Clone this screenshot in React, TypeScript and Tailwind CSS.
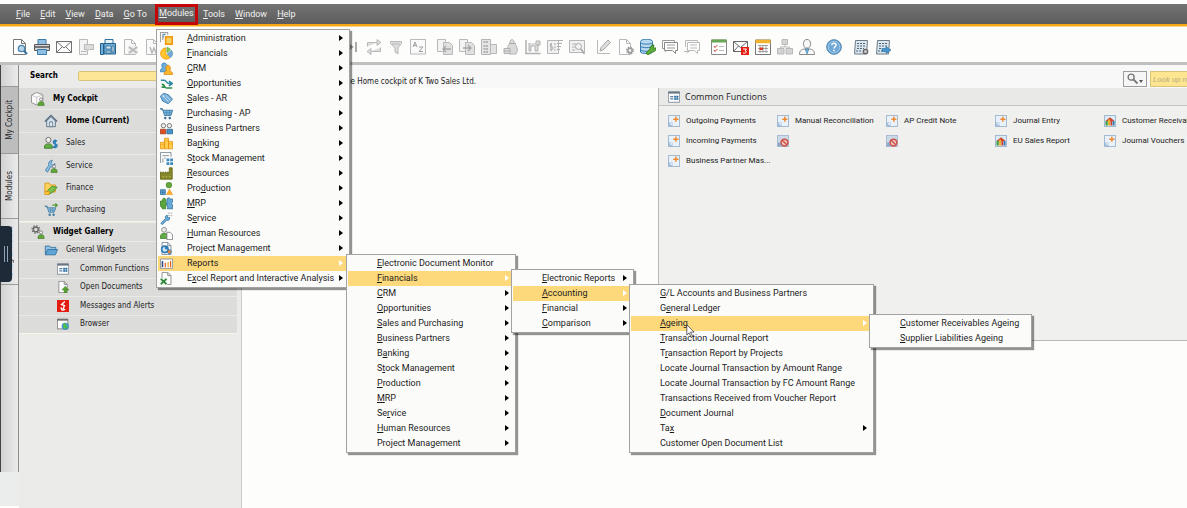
import React from 'react';
import { clsx } from 'clsx';

type MenuEntry = {
  label: string;
  key?: number;
  icon?: React.ReactNode;
  arrow?: boolean;
  active?: boolean;
  sub?: React.ReactNode;
};

function Svg({ children, className = 'size-4' }: { children: React.ReactNode; className?: string }) {
  return (
    <svg viewBox="0 0 16 16" className={clsx('shrink-0', className)} fill="none" aria-hidden="true">
      {children}
    </svg>
  );
}

const sheet = (stroke: string, fill = '#fff') => (
  <path d="M2.5.5h7l4 4v11h-11zM9.5.5v4h4" fill={fill} stroke={stroke} />
);

/* ---------- module menu icons ---------- */

const moduleIcons = {
  admin: (
    <Svg>
      <path d="M.5 12.5V.5h9v3M3.500 10V3.500H6" stroke="#7d7d7d" />
      <path d="M3 3h4M3 6h2" stroke="#5d94bb" strokeWidth="1.5" />
      <rect x="7" y="6" width="8" height="9" fill="#fbd466" stroke="#f0960f" strokeWidth="2" />
    </Svg>
  ),
  financials: (
    <Svg>
      <path d="M7 8V1a7 7 0 1 0 5 12.500z" fill="#ffc62c" stroke="#ee9a12" />
      <path d="M8.5 7V.5a7 7 0 0 1 4.500 2.500z" fill="#8ccf4a" stroke="#4c9434" strokeWidth=".7" />
      <path d="M9 8.5 14 4a7 7 0 0 1-1 9z" fill="#73abd3" stroke="#3b79a8" strokeWidth=".7" />
    </Svg>
  ),
  crm: (
    <Svg>
      <path d="M.5 12c0-3 1-4 2.500-5C1 3 3 .5 6 1.500s3 2 1 5.500l2 5z" fill="#6baedb" stroke="#3b7fb2" />
      <path d="M5 15.500c0-3 1-4 3-5C6 6 8 4 10 4s4 3 2 7c2 1 3.500 1 3.500 4.500z" fill="#fcb62a" stroke="#e28a12" />
    </Svg>
  ),
  opportunities: (
    <Svg>
      <path d="M1 4h4c3 0 3 4 6 4h4M11 5l4 3-4 3" stroke="#2a8aa0" strokeWidth="2" />
      <path d="M15 13.500H8c-5 0 0-4.500-6-4.500M2 12.500h5" stroke="#2c8c4c" strokeWidth="2" />
    </Svg>
  ),
  sales: (
    <Svg>
      <path d="m.5 5 4-3.500 6 2L15.500 9 10 14.500 3 11z" fill="#74aed8" stroke="#3a7aab" />
      <path d="m4 5 6.500 7M7 4l6 6.500" stroke="#d6eaf6" />
      <circle cx="4" cy="5" r="1" fill="#fff" />
    </Svg>
  ),
  purchasing: (
    <Svg>
      <path d="M0 2h3l2.500 8.500h8l2-6.500H4z" fill="#74b4dd" stroke="#346d98" />
      <path d="M5 7h9.500M8 4v6.500M11.500 4v6.500" stroke="#3f80ae" strokeWidth=".7" />
      <circle cx="6.5" cy="13.5" r="1.5" fill="#346d98" />
      <circle cx="12" cy="13.5" r="1.5" fill="#346d98" />
    </Svg>
  ),
  partners: (
    <Svg>
      <circle cx="4.2" cy="4.5" r="2.7" fill="#eee" stroke="#666" />
      <circle cx="11.6" cy="4.5" r="2.700" fill="#eee" stroke="#666" />
      <path d="M.5 14.500V9h6.500v5.500z" fill="#dd5225" stroke="#a83a18" />
      <path d="M8.500 14.500V9h7v5.500z" fill="#4a92c6" stroke="#276997" />
    </Svg>
  ),
  banking: (
    <Svg>
      <path d="M.5 6.500h5v8h-5zM5.500 1.500h5v13h-5zM10.500 5.500h5v9h-5z" fill="#ffcf4b" stroke="#e99416" />
      <path d="M.5 9.500h5M5.500 4.500h5M10.500 8.500h5" stroke="#e99416" strokeWidth=".7" />
    </Svg>
  ),
  stock: (
    <Svg>
      <path d="M.5 13.500V.5h13V6M3 4.500h8M3.500 8v5M5 7.500h2" stroke="#6f7c86" />
      <path d="M8 8h3.500v3.500H8zM12.500 8H16v3.500h-3.500zM8 12.500h3.500V16H8zM12.500 12.500H16V16h-3.500z" fill="#3f8cc0" />
    </Svg>
  ),
  resources: (
    <Svg>
      <path d="M.5 15V6l3 2V6l3 2V6l3 2V6l2 1V1h3.500v14z" fill="#86882a" stroke="#616413" />
      <path d="M3 12h2M7 12h2M11 12h2" stroke="#c8c862" />
    </Svg>
  ),
  production: (
    <Svg>
      <circle cx="11" cy="3.800" r="3.500" fill="#64a73a" stroke="#3f7e20" strokeWidth=".7" />
      <path d="M.5 9.500h6v6h-6z" fill="#74b4dd" stroke="#286a9a" />
      <path d="M3.500 9.500v6M.5 12.500h6" stroke="#286a9a" />
      <path d="m8 15.500 3.700-6.500 3.800 6.500z" fill="#fbb22a" stroke="#e68c10" strokeWidth=".7" />
    </Svg>
  ),
  mrp: (
    <Svg>
      <path d="M.5 5H3c0-5 4-5 4 0v2c2 0 2 3 0 3v4.500H3c0-2-2.500-2-2.500-4.500z" fill="#5aa53c" stroke="#377f20" />
      <path d="M8.500 2.500c1-2 3-2 4 0h3v4c-2 0-2 3 0 3v5H9c2-3-2-4-.5-6z" fill="#66a9d6" stroke="#33719f" />
    </Svg>
  ),
  service: (
    <Svg>
      <path d="m1 14 6-6c-1-2 0-4 2-4v3h3c0 3-2 4-4 3l-5 5.500z" fill="#6fb0dc" stroke="#31719f" />
      <path d="M10 1.500h6M10 4.500h6" stroke="#999" strokeDasharray="2 1" />
    </Svg>
  ),
  hr: (
    <Svg>
      <circle cx="5" cy="3.500" r="3" fill="#eee" stroke="#777" />
      <path d="M.5 14c0-5 1-6 4.500-6s4.500 1 4.500 6z" fill="#63ad45" stroke="#3f7e2c" />
      <path d="M8.500 6.500h4l3 3v6h-7z" fill="#fff" stroke="#777" />
    </Svg>
  ),
  project: (
    <Svg>
      {sheet('#6d7c88')}
      <circle cx="6" cy="9" r="4" fill="#cfe7f5" stroke="#2e7db4" strokeWidth="2" />
      <path d="M6 9V5a4 4 0 0 1 4 4z" fill="#2e7db4" />
      <circle cx="11.500" cy="12" r="2.500" fill="#e98240" stroke="#2e7db4" />
    </Svg>
  ),
  reports: (
    <Svg>
      <path d="M.5 2.500h15v11.500H.5z" fill="#fff" stroke="#7e8790" />
      <path d="M3 5v7.500" stroke="#2d4e82" strokeWidth="2" />
      <path d="M6.500 7v5.500M13 5v7.500" stroke="#e35b1d" strokeWidth="1.500" />
      <path d="M10 6v6.500" stroke="#f2a01c" strokeWidth="1.500" />
    </Svg>
  ),
  excel: (
    <Svg>
      {sheet('#7b7b7b')}
      <path d="M0 7h9v9H0z" fill="#e4f2e4" />
      <path d="m1 8.500 7 6.500M8 8.500 1 15" stroke="#2b8038" strokeWidth="2" />
    </Svg>
  ),
};

/* ---------- sidebar icons ---------- */

const person = (
  <>
    <circle cx="11.5" cy="8.5" r="1.8" fill="#f2f2f2" stroke="#666" strokeWidth=".8" />
    <path d="M8 15.500c0-3.500 1-4.500 3.500-4.500s3.500 1 3.500 4.500z" fill="#5fa53a" stroke="#447f26" strokeWidth=".8" />
  </>
);

const sideIcons = {
  cockpit: (
    <Svg>
      <path d="m.5 3.500 6-3 7 2.500v8l-7 4-6-3z" fill="#fafafa" stroke="#888" />
      <path d="m.5 3.500 6 2.500 7-3M6.500 6v9" stroke="#aaa" strokeWidth=".7" />
      {person}
    </Svg>
  ),
  home: (
    <Svg>
      <path d="M3 8v6.500h10V8L8 3z" fill="#cfe0ef" stroke="#5b6f80" />
      <path d="m1 8.500 7-7 7 7" stroke="#55697a" strokeWidth="1.500" />
      <path d="M6.500 14.500V9h3v5.500z" fill="#fff" stroke="#5b6f80" />
    </Svg>
  ),
  sales: (
    <Svg>
      <circle cx="5" cy="4.500" r="3" fill="#eee" stroke="#666" />
      <path d="M.5 14c0-4 1-5 4.500-5s4.500 1 4.500 5z" fill="#63ad45" stroke="#3f7e2c" />
      <path d="M15 6c-3-2-5 0-4 2s4 1 4 3-3 3-5 1M12.700 4v10" stroke="#2579b6" strokeWidth="1.600" />
    </Svg>
  ),
  service: (
    <Svg>
      <path d="m1.500 13 4-6c-1-3 1-5.500 4-5.500L8 5l2 2 2.500-2c0 3-2 4.500-5 4L4 15z" fill="#8cbfe0" stroke="#4580aa" />
      {person}
    </Svg>
  ),
  finance: (
    <Svg>
      <path d="M1 2.500h5l1 2h6v8H1z" fill="#fcd25a" stroke="#dd9718" />
      <path d="m4 11 5-5 6 1-4 5-5 3z" fill="#7cc04a" stroke="#448a28" />
      <path d="M1 12h5v3.500H1z" fill="#ffc438" stroke="#dd9718" />
    </Svg>
  ),
  purchasing: (
    <Svg>
      <path d="M1 3.500h2.500l2 7h6l2-5H4.500z" fill="#9ccbe8" stroke="#427aa2" />
      <path d="M5.500 8h7M7.500 5.500v5M10 5.500v5" stroke="#427aa2" strokeWidth=".7" />
      <circle cx="6.500" cy="13.500" r="1.400" fill="#427aa2" />
      <circle cx="11" cy="13.500" r="1.400" fill="#427aa2" />
      <path d="M9.500 2.500H15M13 .5l2 2-2 2" stroke="#4f9a35" strokeWidth="1.500" />
    </Svg>
  ),
  gallery: (
    <Svg>
      <circle cx="5.500" cy="5" r="2.800" stroke="#666" strokeWidth="1.600" />
      <circle cx="5.500" cy="5" r="4.300" stroke="#666" strokeWidth="1.400" strokeDasharray="1.500 1.880" />
      {person}
    </Svg>
  ),
  folder: (
    <Svg>
      <path d="M1.500 13V3.500h5l1 1.500h6v3" fill="#8fc3e6" stroke="#35709c" />
      <path d="M4 7.500h11.500L13 13.500H1.500z" fill="#5ea6d8" stroke="#35709c" />
    </Svg>
  ),
  functions: (
    <Svg>
      <path d="M.5 1h15v14H.5z" fill="#fff" stroke="#697782" />
      <path d="M.5 1h15v2.500H.5z" fill="#697782" />
      <path d="M3 7.500h4M3 10.500h4" stroke="#5b7f9f" strokeWidth="1.500" />
      <path d="M8.500 6.500h2v2h-2zM11.500 6.500h2v2h-2zM8.500 9.500h2v2h-2zM11.500 9.500h2v2h-2z" fill="#246ca2" stroke="#246ca2" strokeWidth=".5" />
    </Svg>
  ),
  open: (
    <Svg>
      {sheet('#777')}
      <path d="m11 7 5 5h-3v4H9.500v-4H6.500z" fill="#55a130" stroke="#38781c" strokeWidth=".6" />
    </Svg>
  ),
  alert: (
    <Svg>
      <path d="M0 0h16v16H0z" fill="#e51c10" />
      <path d="M10.500 2 6 6l4 1.500L8 12M5 10l2 3.500 4-1" stroke="#fff" strokeWidth="1.800" />
    </Svg>
  ),
  browser: (
    <Svg>
      <path d="M.5 1.500h14v13H.5z" fill="#fff" stroke="#666" />
      <path d="M.5 2.500h14" stroke="#666" strokeWidth="2" />
      <circle cx="11" cy="11" r="4.500" fill="#3d9fd6" stroke="#2c7ca9" strokeWidth=".6" />
      <path d="M8 9c2-3 4-2 4 0s3 1 2 3-3 3-4 2-2-2-2-5" fill="#50bd4d" />
    </Svg>
  ),
};

/* ---------- toolbar icons ---------- */

const G = '#b9b9b9';

const copySheets = (
  <>
    <path d="M.5.5h8v12h-8z" fill="#f3f3f3" stroke={G} />
    <path d="M6.500 3.500h6l3 3v9h-9z" fill="#e0e0e0" stroke={G} />
  </>
);

const tools = {
  preview: (
    <Svg>
      <path d="M1.500.5h8l4 4v11h-12zM9.500.5v4h4" fill="#fff" stroke="#777" />
      <circle cx="9.500" cy="9.500" r="3.200" fill="#b5d5eb" stroke="#4d87b0" strokeWidth="1.300" />
      <path d="m12 12 3 3" stroke="#33719f" strokeWidth="2" />
    </Svg>
  ),
  print: (
    <Svg>
      <path d="M4 .5h8v6H4z" fill="#8dc0e2" stroke="#3c7ba8" />
      <path d="M.5 5.500h15v6H.5z" fill="#d5d5d5" stroke="#595959" />
      <path d="M1 8h14" stroke="#555" strokeWidth="1.500" />
      <path d="M3.500 10.500h9v5h-9z" fill="#8dc0e2" stroke="#3c7ba8" />
    </Svg>
  ),
  mail: (
    <Svg>
      <path d="M.5 2.500h15v11H.5zl7.500 6.500 7.500-6.500M.5 13.500 6 8M15.500 13.500 10 8" fill="#fdfdfd" stroke="#737373" />
    </Svg>
  ),
  sms: (
    <Svg>
      <path d="M1.500.5h8v15h-8z" fill="#f3f3f3" stroke={G} />
      <path d="M3 12.500h5" stroke={G} />
      <path d="M6.500 5.500h9v5H11l-2 2v-2H6.500z" fill="#dcdcdc" stroke={G} />
    </Svg>
  ),
  fax: (
    <Svg>
      <path d="M5 .5h8v6H5z" fill="#e5f2fa" stroke="#33719f" />
      <path d="M.5 4.500h3v11h-3zM4 4.500h11.500v10.500H4z" fill="#6fafd9" stroke="#275f8b" />
      <path d="M6 7h5v3H6zM12 7h2v6h-2zM6 12h5v2H6z" fill="#cfe7f5" stroke="#275f8b" strokeWidth=".7" />
    </Svg>
  ),
  excel: (
    <Svg>
      {sheet(G, '#fafafa')}
      <path d="M6 7h10v8H6z" fill="#eee" />
      <path d="m7 8 8 6M15 8l-8 6" stroke={G} strokeWidth="2" />
    </Svg>
  ),
  word: (
    <Svg>
      {sheet(G, '#fafafa')}
      <path d="m6 8 2 6 2-5 2 5 2-6" stroke={G} strokeWidth="1.500" />
    </Svg>
  ),
  last: (
    <Svg>
      <path d="m4 3.500 6 4.500-6 4.500z" fill="#aaa" />
      <path d="M12 3v10" stroke="#aaa" strokeWidth="2" />
    </Svg>
  ),
  refresh: (
    <Svg>
      <path d="M1.500 7.500v-4h10M11 .5v6l4-3zM14.500 8.500v4h-10M5 9.500v6l-4-3z" fill="#ddd" stroke={G} />
    </Svg>
  ),
  filter: (
    <Svg>
      <path d="M2.500 2.500h11v2L10 9v6l-3-2V9L2.500 4.500z" fill="#ddd" stroke={G} />
      <path d="M4 5h8" stroke={G} />
    </Svg>
  ),
  sort: (
    <Svg>
      <path d="M.5.5h15v14.500H.5z" fill="#fafafa" stroke={G} />
      <path d="m3 8 2-5 2 5M4 6.500h2M9 8h4l-4 4.500h4" stroke="#9f9f9f" />
    </Svg>
  ),
  base: (
    <Svg>
      {copySheets}
      <path d="M14 10H6M9 7l-3 3 3 3" stroke="#a5a5a5" strokeWidth="1.300" />
    </Svg>
  ),
  target: (
    <Svg>
      {copySheets}
      <path d="M4 9h8M9 6l3 3-3 3" stroke="#a5a5a5" strokeWidth="1.300" />
    </Svg>
  ),
  gross: (
    <Svg>
      <path d="M.5.5h9v15h-9z" fill="#e6e6e6" stroke="#b5b5b5" />
      <path d="M2.500 3h5M2.500 7h5M2.500 10h5M2.500 13h5" stroke="#a5a5a5" strokeWidth="1.500" strokeDasharray="2 .5" />
      <path d="M9.500 5.500h6v9h-6z" fill="#e2e2e2" stroke={G} />
    </Svg>
  ),
  payment: (
    <Svg>
      <path d="M7 4C6-.5 12-.5 11 4c4 4 4 8 2 11H6C4 11 4 7 7 4z" fill="#dadada" stroke="#b5b5b5" />
      <path d="M1 9.500h6v5H1z" fill="#ddd" stroke="#b0b0b0" />
      <path d="M6 4.500h7M1 12h6" stroke="#aaa" />
    </Svg>
  ),
  volume: (
    <Svg>
      <path d="M1 1v13.500h14.500" stroke="#b0b0b0" strokeWidth="1.500" />
      <path d="M4 4v8h2V7h4v5h3V4M11 2h4v4h-4z" fill="#ddd" stroke="#b0b0b0" />
    </Svg>
  ),
  journal: (
    <Svg>
      <path d="M.5 1.500h11v13H.5z" fill="#f1f1f1" stroke="#b5b5b5" />
      <path d="M10 1.500h6M10 4.500h5M10 7.500h4M10 10.500h3M7 5h2M7 8h2M7 11h2" stroke="#b0b0b0" />
      <path d="M5 5c-3 0-2 3 0 3s1 3-1 3M4 4v8" stroke="#a5a5a5" />
    </Svg>
  ),
  lookup: (
    <Svg>
      <path d="M.5 1.500h15v12H.5z" fill="#f1f1f1" stroke="#b5b5b5" />
      <path d="M3 5h4M3 8h3M3 11h3" stroke="#b0b0b0" />
      <circle cx="9.500" cy="7.500" r="3" fill="#f3f3f3" stroke="#a5a5a5" />
      <path d="m12 10 3.500 5" stroke="#a5a5a5" strokeWidth="1.500" />
    </Svg>
  ),
  layout: (
    <Svg>
      <path d="M1.500 1v13.500H14" stroke={G} />
      <path d="m4 12 1-3.500L12 1l2.500 2.500L7 11z" fill="#ddd" stroke="#a5a5a5" />
    </Svg>
  ),
  formSettings: (
    <Svg>
      <path d="M1.500.5h7l4 4v11h-11zM8.500.5v4h4" fill="#fff" stroke={G} />
      <circle cx="12" cy="11.500" r="2.200" fill="#eee" stroke="#999" strokeWidth="1.500" />
      <circle cx="12" cy="11.500" r="3.400" stroke="#999" strokeWidth="1.200" strokeDasharray="1.400 1.270" />
    </Svg>
  ),
  query: (
    <Svg>
      <path d="M.5 2.500c0-3 12-3 12 0v10.500c0 2-12 2-12 0z" fill="#b7d9f1" stroke="#347aad" />
      <path d="M.5 4c2 1.500 10 1.500 12 0M.5 7.500c2 1.500 10 1.500 12 0M.5 11c2 1.500 6 1.500 8 1" stroke="#347aad" />
      <path d="m6 14 4-4c0-2 1-4 4-4l-1 3h3c0 3-2 4-4 4l-4 3z" fill="#5fae3b" stroke="#39801f" />
    </Svg>
  ),
  chat: (
    <Svg>
      <path d="M.5 1.500h12v8h-6l-3 3v-3h-3z" fill="#fff" stroke="#999" />
      <path d="M2.500 3.500h13v8h-2v3l-3-3h-8z" fill="#fff" stroke="#888" />
      <path d="M5 6h8M5 9h8" stroke="#999" />
    </Svg>
  ),
  chatOff: (
    <Svg>
      <path d="M1.500 8V1.500h12v2" stroke={G} />
      <path d="M3.500 3.500h12v8h-2v3l-3-3h-7z" fill="#fff" stroke={G} />
      <path d="M6 6h7M6 9h7M0 12.500h5M3 10.500l2 2-2 2" stroke={G} />
    </Svg>
  ),
  checklist: (
    <Svg>
      <path d="M.5 1h15v14.500H.5z" fill="#fff" stroke="#888" />
      <path d="M.5 2h15" stroke="#6aa755" strokeWidth="3" />
      <path d="m3 7 1 1.500L6.500 6M3 11l1 1.500L6.500 10" stroke="#d03b2c" />
      <path d="M8 7.500h5M8 11.500h5" stroke="#bbb" />
    </Svg>
  ),
  inbox: (
    <Svg>
      <path d="M.5 2.500h14v10H.5zl7 6 7-6M.5 12.500 5.500 7" fill="#fff" stroke="#666" />
      <path d="M8 8h8v8H8z" fill="#e51c10" />
      <path d="M10 10h3.500l-1.500 2c3 0 1 3-2 2" stroke="#fff" />
    </Svg>
  ),
  calendar: (
    <Svg>
      <path d="M.5 1h15v14.500H.5z" fill="#fff" stroke="#777" />
      <path d="M.5 2.500h15" stroke="#f2b42e" strokeWidth="3.500" />
      <path d="M3 6.500h10M3 9.500h10M3 12.500h10M5 6v8M8 6v8M11 6v8" stroke="#8f8f8f" strokeWidth=".8" />
      <path d="M4.500 8.500H8v2.500H4.500z" fill="#d93a20" />
    </Svg>
  ),
  org: (
    <Svg>
      <path d="M5 .5h5.500v5H5zM.5 9.500h6.500v5.500H.5zM9 9.500h6.500v5.500H9z" fill="#d4d4d4" stroke={G} />
      <path d="M8 6v2M3.500 9.500V8h9v1.500" stroke={G} />
    </Svg>
  ),
  user: (
    <Svg>
      <ellipse cx="8" cy="4.800" rx="3.500" ry="4.300" fill="#fafafa" stroke="#888" />
      <path d="M.5 15.500c0-4 2-5 5-5.500h5c3 .5 5 1.500 5 5.500z" fill="#fafafa" stroke="#888" />
      <path d="m6 10 2 5 2-5z" fill="#72b0dc" stroke="#3c7ba8" strokeWidth=".6" />
    </Svg>
  ),
  help: (
    <Svg>
      <circle cx="8" cy="8" r="7.300" fill="#6ea8d6" stroke="#4a81ae" />
      <circle cx="8" cy="8" r="5.800" stroke="#b4d5ee" strokeWidth=".7" />
      <path d="M5.800 6.200c.2-2.800 4.600-2.400 4.300.2C9.900 7.700 8 7.700 8 9.500M8 10.800v1.400" stroke="#fff" strokeWidth="1.400" />
    </Svg>
  ),
  tasks: (
    <Svg>
      <path d="M2.500 1.500h12l-1 13.500h-12z" fill="#dbe7f0" stroke="#6d7b87" />
      <path d="M4 4.500h9M4 7h9M4 9.500h7M3 12h6" stroke="#4d6376" strokeDasharray="2 1" />
      <circle cx="12.500" cy="12.500" r="2.200" fill="#ccc" stroke="#666" strokeWidth="1.300" />
    </Svg>
  ),
  taskNext: (
    <Svg>
      <path d="M2.500 1.500h12l-1 13.500h-12z" fill="#dbe7f0" stroke="#6d7b87" />
      <path d="M4 4.500h9M4 7h9M4 9.500h3M3 12h6" stroke="#4d6376" strokeDasharray="2 1" />
      <path d="M7 9.500h4v-2l5 3.500-5 3.500v-2H7z" fill="#4796d2" stroke="#28699a" strokeWidth=".6" />
    </Svg>
  ),
};

type ToolName = keyof typeof tools;

const leftTools: ToolName[] = ['preview', 'print', 'mail', 'sms', 'fax', 'excel', 'word'];

const rightTools: ToolName[][] = [
  ['last', 'refresh', 'filter', 'sort'],
  ['base', 'target', 'gross', 'payment', 'volume', 'journal', 'lookup'],
  ['layout', 'formSettings', 'query', 'chat', 'chatOff'],
  ['checklist', 'inbox', 'calendar', 'org', 'user'],
  ['help'],
  ['tasks', 'taskNext'],
];

function ToolGroup({ names }: { names: ToolName[] }) {
  return (
    <div className="flex">
      {names.map((name) => (
        <button key={name} type="button" aria-label={name} className="flex w-[22px] justify-center">
          {tools[name]}
        </button>
      ))}
    </div>
  );
}

/* ---------- menus ---------- */

function Mnemonic({ label, at }: { label: string; at?: number }) {
  if (at === undefined) return <>{label}</>;
  return (
    <>
      {label.slice(0, at)}
      <span className="underline underline-offset-1">{label[at]}</span>
      {label.slice(at + 1)}
    </>
  );
}

function Menu({ entries, className }: { entries: MenuEntry[]; className: string }) {
  return (
    <ul
      className={clsx(
        'absolute z-10 border border-[#a2a2a2] bg-[#fbfbfa] p-px shadow-[2px_2px_1px_rgba(0,0,0,0.42)]',
        className,
      )}
    >
      {entries.map((entry) => (
        <li key={entry.label} className={clsx('relative', entry.active && 'bg-[#fdd97b]')}>
          <button type="button" className="flex h-[15px] w-full items-center pr-[5px] text-left">
            <span className="w-[29px] shrink-0 pl-[2px] [&>svg]:size-[13px]">{entry.icon}</span>
            <span className="flex-1 pt-[2px] whitespace-nowrap">
              <Mnemonic label={entry.label} at={entry.key} />
            </span>
            {entry.arrow && (
              <svg viewBox="0 0 4 6" className={clsx('h-[6px] w-1', entry.active ? 'fill-white' : 'fill-black')}>
                <path d="M0 0l4 3-4 3z" />
              </svg>
            )}
          </button>
          {entry.sub}
        </li>
      ))}
    </ul>
  );
}

const ageingMenu: MenuEntry[] = [
  { label: 'Customer Receivables Ageing', key: 0 },
  { label: 'Supplier Liabilities Ageing', key: 0 },
];

const accountingMenu: MenuEntry[] = [
  { label: 'G/L Accounts and Business Partners', key: 0 },
  { label: 'General Ledger', key: 1 },
  {
    label: 'Ageing',
    key: 0,
    arrow: true,
    active: true,
    sub: <Menu entries={ageingMenu} className="-top-[2px] left-[238px] w-[163px]" />,
  },
  { label: 'Transaction Journal Report', key: 0 },
  { label: 'Transaction Report by Projects', key: 1 },
  { label: 'Locate Journal Transaction by Amount Range' },
  { label: 'Locate Journal Transaction by FC Amount Range' },
  { label: 'Transactions Received from Voucher Report' },
  { label: 'Document Journal', key: 0 },
  { label: 'Tax', key: 2, arrow: true },
  { label: 'Customer Open Document List' },
];

const financialsMenu: MenuEntry[] = [
  { label: 'Electronic Reports', key: 0, arrow: true },
  {
    label: 'Accounting',
    key: 0,
    arrow: true,
    active: true,
    sub: <Menu entries={accountingMenu} className="-top-[2px] left-[116px] w-[245px]" />,
  },
  { label: 'Financial', key: 0, arrow: true },
  { label: 'Comparison', key: 0, arrow: true },
];

const reportsMenu: MenuEntry[] = [
  { label: 'Electronic Document Monitor', key: 0 },
  {
    label: 'Financials',
    key: 0,
    arrow: true,
    active: true,
    sub: <Menu entries={financialsMenu} className="-top-[2px] left-[163px] w-[123px]" />,
  },
  { label: 'CRM', key: 0, arrow: true },
  { label: 'Opportunities', key: 0, arrow: true },
  { label: 'Sales and Purchasing', key: 0, arrow: true },
  { label: 'Business Partners', key: 0, arrow: true },
  { label: 'Banking', key: 1, arrow: true },
  { label: 'Stock Management', key: 1, arrow: true },
  { label: 'Production', key: 0, arrow: true },
  { label: 'MRP', key: 0, arrow: true },
  { label: 'Service', key: 2, arrow: true },
  { label: 'Human Resources', key: 0, arrow: true },
  { label: 'Project Management', key: 3, arrow: true },
];

const modulesMenu: MenuEntry[] = [
  { label: 'Administration', key: 0, icon: moduleIcons.admin, arrow: true },
  { label: 'Financials', key: 0, icon: moduleIcons.financials, arrow: true },
  { label: 'CRM', key: 0, icon: moduleIcons.crm, arrow: true },
  { label: 'Opportunities', key: 0, icon: moduleIcons.opportunities, arrow: true },
  { label: 'Sales - AR', key: 0, icon: moduleIcons.sales, arrow: true },
  { label: 'Purchasing - AP', key: 0, icon: moduleIcons.purchasing, arrow: true },
  { label: 'Business Partners', key: 0, icon: moduleIcons.partners, arrow: true },
  { label: 'Banking', key: 2, icon: moduleIcons.banking, arrow: true },
  { label: 'Stock Management', key: 1, icon: moduleIcons.stock, arrow: true },
  { label: 'Resources', key: 0, icon: moduleIcons.resources, arrow: true },
  { label: 'Production', key: 3, icon: moduleIcons.production, arrow: true },
  { label: 'MRP', key: 0, icon: moduleIcons.mrp, arrow: true },
  { label: 'Service', key: 1, icon: moduleIcons.service, arrow: true },
  { label: 'Human Resources', key: 0, icon: moduleIcons.hr, arrow: true },
  { label: 'Project Management', key: 3, icon: moduleIcons.project, arrow: true },
  {
    label: 'Reports',
    icon: moduleIcons.reports,
    arrow: true,
    active: true,
    sub: <Menu entries={reportsMenu} className="-top-[2px] left-[188px] w-[170px]" />,
  },
  { label: 'Excel Report and Interactive Analysis', key: 1, icon: moduleIcons.excel, arrow: true },
];

function MenuBar() {
  return (
    <nav className="flex h-5 items-center bg-linear-to-b from-[#747474] to-[#5c5c5c] pl-[11px] text-[9px] text-[#f1f1f1]">
      {['File', 'Edit', 'View', 'Data', 'Go To'].map((item) => (
        <button key={item} type="button" className="px-[5px] pt-[2px] whitespace-nowrap">
          <Mnemonic label={item} at={0} />
        </button>
      ))}
      <div className="relative ml-[3px]">
        <button type="button" className="block h-[21px] w-[43px] border-[3px] border-[#c40508] whitespace-nowrap">
          <span className="flex justify-center">
            <span>
              <Mnemonic label="Modules" at={0} />
            </span>
          </span>
        </button>
        <div className="absolute top-[25px] left-[1px] text-[#1b1b1b]">
          <Menu entries={modulesMenu} className="top-0 left-0 w-[194px]" />
        </div>
      </div>
      {['Tools', 'Window', 'Help'].map((item) => (
        <button key={item} type="button" className="px-[5px] pt-[2px] whitespace-nowrap">
          <Mnemonic label={item} at={0} />
        </button>
      ))}
    </nav>
  );
}

/* ---------- sidebar ---------- */

type SideItem = { label: string; icon: React.ReactNode; level: 0 | 1 | 2; bold?: boolean };

const cockpitItems: SideItem[] = [
  { label: 'My Cockpit', icon: sideIcons.cockpit, level: 0, bold: true },
  { label: 'Home (Current)', icon: sideIcons.home, level: 1, bold: true },
  { label: 'Sales', icon: sideIcons.sales, level: 1 },
  { label: 'Service', icon: sideIcons.service, level: 1 },
  { label: 'Finance', icon: sideIcons.finance, level: 1 },
  { label: 'Purchasing', icon: sideIcons.purchasing, level: 1 },
];

const widgetItems: SideItem[] = [
  { label: 'Widget Gallery', icon: sideIcons.gallery, level: 0, bold: true },
  { label: 'General Widgets', icon: sideIcons.folder, level: 1 },
  { label: 'Common Functions', icon: sideIcons.functions, level: 2 },
  { label: 'Open Documents', icon: sideIcons.open, level: 2 },
  { label: 'Messages and Alerts', icon: sideIcons.alert, level: 2 },
  { label: 'Browser', icon: sideIcons.browser, level: 2 },
];

const indents = ['pl-[12px] gap-2', 'pl-[25px] gap-2', 'pl-[38px] gap-[11px]'];

function SideGroup({ items, className }: { items: SideItem[]; className: string }) {
  return (
    <ul className={clsx('grid auto-rows-fr border-b border-[#f6f4e6] bg-[#dcdcdb]', className)}>
      {items.map((item) => (
        <li key={item.label} className="flex min-h-0 border-t border-[#e9e9e8]">
          <a href="#" className={clsx('flex items-center', indents[item.level], item.bold && 'font-bold text-black')}>
            <span className={item.level === 2 ? '[&>svg]:size-3' : '[&>svg]:size-[14px]'}>{item.icon}</span>
            {item.label}
          </a>
        </li>
      ))}
    </ul>
  );
}

const tabs = [
  { label: 'My Cockpit', className: 'h-[67px] bg-[#bdbdbd]' },
  { label: 'Modules', className: 'h-[65px]' },
  { label: 'Drag & Relate', className: 'h-[66px]' },
];

function TabStrip() {
  return (
    <div className="relative flex w-[19px] shrink-0 flex-col text-[8px] text-[#222]">
      <div className="flex flex-1 flex-col border-r border-l border-r-[#8e8e8e] border-l-[#444] bg-linear-to-r from-[#d2d2d2] to-[#ebebeb]">
        <div className="h-[22px] border-b border-[#9a9a9a]" />
        {tabs.map((tab) => (
          <button
            key={tab.label}
            type="button"
            className={clsx('flex items-center justify-center border-b border-[#9a9a9a]', tab.className)}
          >
            <span className="rotate-180 whitespace-nowrap [writing-mode:vertical-rl]">{tab.label}</span>
          </button>
        ))}
      </div>
      <div className="mb-[2px] h-[34px] bg-[#ebedec]" />
      <button
        type="button"
        aria-label="Show side panel"
        className="absolute top-[161px] left-0 flex h-[56px] w-3 items-center justify-center gap-[2px] rounded-r bg-[#1f2a38]"
      >
        <span className="h-4 w-px bg-[#8fa3bb]" />
        <span className="h-4 w-px bg-[#8fa3bb]" />
      </button>
    </div>
  );
}

function Sidebar() {
  return (
    <aside className="w-[223px] shrink-0 border-r border-[#cdcdcd] bg-[#ebebea] pr-1 text-[8px] text-[#222]">
      <div className="flex h-[22px] items-center pl-[11px]">
        <label htmlFor="side-search" className="w-12 font-bold text-black">
          Search
        </label>
        <input id="side-search" className="h-[10px] min-w-0 flex-1 rounded-xs border border-[#d8c479] bg-[#fde796]" />
      </div>
      <SideGroup items={cockpitItems} className="h-[135px]" />
      <SideGroup items={widgetItems} className="h-[112px]" />
    </aside>
  );
}

/* ---------- common functions widget ---------- */

const shortcutIcons = {
  form: (
    <Svg className="size-3">
      <path d="M.5.5h15v15H.5z" fill="#e9f2fa" stroke="#7f9fc0" />
      <path d="M10.500 2v7M7 5.500h7" stroke="#f08a32" strokeWidth="2" />
      <path d="M1 10h5v5H1z" fill="#8fb2d6" />
      <path d="m2 14 3-3M2 11h3v3" stroke="#fff" />
    </Svg>
  ),
  blocked: (
    <Svg className="size-3">
      <path d="M.5.5h15v15H.5z" fill="#ccd9e6" stroke="#8ea7c4" />
      <path d="M1 10h5v5H1z" fill="#8fa8c8" />
      <circle cx="10" cy="10" r="4.500" fill="#f2c8c4" stroke="#d0504a" strokeWidth="2" />
      <path d="m7 7 6 6" stroke="#d0504a" strokeWidth="2" />
    </Svg>
  ),
  report: (
    <Svg className="size-3">
      <path d="M.5.5h15v15H.5z" fill="#dcebf7" stroke="#7f9fc0" />
      <path d="m2 8 6-5 6 5z" fill="#c8442c" />
      <path d="M2 8h3v6H2z" fill="#3f9b3c" />
      <path d="M5.500 6H8v8H5.500z" fill="#efb02c" />
      <path d="M8.500 6H11v8H8.500z" fill="#d2452c" />
      <path d="M11.500 8H14v6h-2.500z" fill="#3472b4" />
    </Svg>
  ),
};

const shortcuts: { label: string; kind: keyof typeof shortcutIcons }[] = [
  { label: 'Outgoing Payments', kind: 'form' },
  { label: 'Manual Reconciliation', kind: 'form' },
  { label: 'AP Credit Note', kind: 'form' },
  { label: 'Journal Entry', kind: 'form' },
  { label: 'Customer Receivab', kind: 'report' },
  { label: 'Incoming Payments', kind: 'form' },
  { label: '', kind: 'blocked' },
  { label: '', kind: 'blocked' },
  { label: 'EU Sales Report', kind: 'report' },
  { label: 'Journal Vouchers', kind: 'form' },
  { label: 'Business Partner Mas...', kind: 'form' },
];

function CommonFunctions() {
  return (
    <section className="ml-auto w-[529px] overflow-hidden border-b border-l border-[#b9b9b9] bg-[#f0f0ef]">
      <h2 className="flex h-[18px] items-center gap-[5px] border-b border-[#c4c4c4] bg-[#e9e9e8] pl-[9px] font-['Open_Sans',sans-serif] text-[9px] text-[#222]">
        <span className="[&>svg]:size-3">{sideIcons.functions}</span>
        Common Functions
      </h2>
      <ul className="grid h-[234px] auto-rows-[20px] grid-cols-[repeat(5,109px)] pt-[5px] pl-[9px] font-['Roboto',sans-serif] text-[8px]">
        {shortcuts.map((item, i) => (
          <li key={i} className="flex items-center gap-[6px] whitespace-nowrap">
            {shortcutIcons[item.kind]}
            {item.label && <a href="#">{item.label}</a>}
          </li>
        ))}
      </ul>
    </section>
  );
}

function Cockpit() {
  return (
    <main className="min-w-0 flex-1 overflow-hidden bg-[#fdfdfc]">
      <div className="flex h-[23px] items-end bg-[#f8f8f8] text-[8px]">
        <p className="w-[234px] self-center pt-[10px] text-right whitespace-nowrap">
          Welcome to the Home cockpit of K Two Sales Ltd.
        </p>
        <button
          type="button"
          aria-label="Search options"
          className="mr-[3px] mb-px ml-auto flex h-4 w-6 items-center justify-center border border-[#9d9d9d] bg-[#f6f6f6]"
        >
          <Svg className="size-3">
            <circle cx="5.500" cy="5.500" r="4" stroke="#777" strokeWidth="1.800" />
            <path d="m8.500 8.500 5.500 5.500" stroke="#777" strokeWidth="2.500" />
          </Svg>
          <svg viewBox="0 0 4 3" className="mt-1 h-[3px] w-1 fill-[#555]">
            <path d="M0 0h4l-2 3z" />
          </svg>
        </button>
        <input
          aria-label="Look up menu and data"
          placeholder="Look up m"
          className="mb-px h-4 w-[37px] border border-r-0 border-[#d8c479] bg-[#fde68f] pl-[2px] font-['Roboto',sans-serif] text-[8px] italic placeholder:text-[#b9ad83]"
        />
      </div>
      <CommonFunctions />
    </main>
  );
}

export default function App() {
  return (
    <div className="relative flex min-h-screen flex-col overflow-hidden bg-[#fdfdfc] pt-1 font-['DejaVu_Sans_Condensed','DejaVu_Sans',sans-serif] text-[#222]">
      <header className="relative z-10">
        <div className="relative z-10 font-['Roboto',sans-serif]">
          <MenuBar />
        </div>
        <div className="h-[3px] border-b border-[#fbd58a] bg-[#f7a614]" />
        <div className="flex h-[38px] items-center gap-[5px] border-b-[3px] border-[#bfbfbf] bg-[#fdfdfc] pt-1 pl-[9px]">
          <ToolGroup names={leftTools} />
          <div className="ml-[173px] flex gap-[5px]">
            {rightTools.map((names) => (
              <ToolGroup key={names[0]} names={names} />
            ))}
          </div>
        </div>
      </header>
      <div className="flex flex-1">
        <TabStrip />
        <Sidebar />
        <Cockpit />
      </div>
      <svg viewBox="0 0 12 19" className="absolute top-[324px] left-[686px] z-20 h-[14px] w-[9px]" aria-hidden="true">
        <path d="M1 1v14l3-3 3 6 2-1-3-6h5z" fill="#fff" stroke="#333" />
      </svg>
    </div>
  );
}
